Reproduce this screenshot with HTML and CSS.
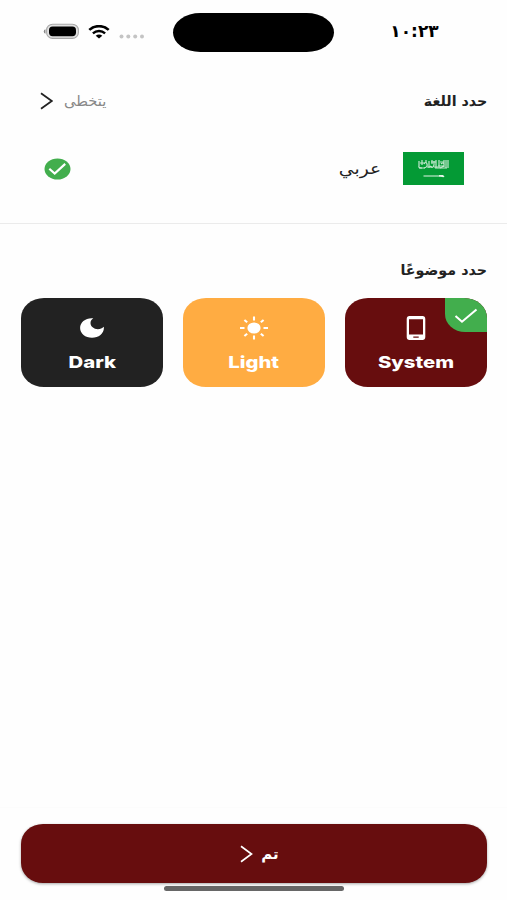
FILE: index.html
```html
<!DOCTYPE html>
<html lang="ar" dir="rtl">
<head>
    <meta charset="utf-8" />
    <meta name="viewport" content="width=device-width, initial-scale=1.0" />
    <title>حدد اللغة</title>
    <link rel="stylesheet" href="styles.css">
</head>
<body>

    <div class="statusbar">
        <span class="time">١٠:٢٣</span>
        <div class="island"></div>
        <div class="status-icons">
            <svg class="battery" width="37" height="17" viewBox="0 0 37 17">
                <path d="M2.5 6.2a2.4 2.4 0 0 0 0 4.6z" fill="#888" />
                <rect x="3.6" y="1.2" width="31.8" height="14.2" rx="6" fill="#e2e2e2" stroke="#a8a8a8" stroke-width="1.1" />
                <rect x="6" y="3.6" width="27" height="9.6" rx="3.6" fill="#000" />
            </svg>
            <svg class="wifi" width="22" height="14" viewBox="0 0 22 14">
                <path d="M1.3 4.9C6.7-.1 15.3-.1 20.7 4.9" fill="none" stroke="#000" stroke-width="2.6" />
                <path d="M4.9 8.3C8.4 5.2 13.6 5.2 17.1 8.3" fill="none" stroke="#000" stroke-width="2.4" />
                <path d="M7.7 10.7C9.6 9.1 12.4 9.1 14.3 10.7L11 13.6z" fill="#000" />
            </svg>
            <svg class="signal" width="26" height="5" viewBox="0 0 26 5">
                <g fill="#c4c4c4">
                    <circle cx="2.5" cy="2.5" r="2" />
                    <circle cx="9.3" cy="2.5" r="2" />
                    <circle cx="16.2" cy="2.5" r="2" />
                    <circle cx="23" cy="2.5" r="2" />
                </g>
            </svg>
        </div>
    </div>

    <header>
        <h1 class="title">حدد اللغة</h1>
        <a href="#" class="skip">
            <span class="skip-text">يتخطى</span>
            <svg width="13" height="18" viewBox="0 0 13 18">
                <path d="M1 1.2L11.8 9L1 16.8" fill="none" stroke="#222" stroke-width="1.8" />
            </svg>
        </a>
    </header>

    <div class="language">
        <svg class="flag" width="61" height="33" viewBox="0 0 61 33">
            <rect width="61" height="33" fill="#049a35" />
            <g fill="none" stroke="#c5e8cf" stroke-width="1.2">
                <path d="M16 9v5q-1 2 3 2M19 8v5M21 12q2-3 3 0t-3 4M23 8v3M26 9v7M27 14q3 3 4-1v-4M29 8v4M33 8v8M31 15h4M36 8v8M38 12q2-2 3 0t-4 4M41 8v7M43 8v8M45 8v8" />
                <path d="M17 11h5M24 15h5M28 10h5M35 14h5M37 10h4M16 16h6M32 16h12" />
            </g>
            <path d="M20.5 24h17" stroke="#e4f5e8" stroke-width="1" />
            <path d="M36 23h4l1.5 1.5l-1 .7l-4.5-.6z" fill="#e4f5e8" />
        </svg>
        <span class="language-name">عربي</span>
        <svg class="selected" width="27" height="22" viewBox="0 0 27 22">
            <ellipse cx="13.5" cy="11" rx="13" ry="10.6" fill="#42ae4d" />
            <path d="M5.3 10.8L10.7 15.6L21.2 5.9" fill="none" stroke="#fff" stroke-width="2.2" />
        </svg>
    </div>

    <main>
        <h2 class="title">حدد موضوعًا</h2>
        <div class="themes">
            <div class="card system">
                <div class="badge">
                    <svg width="24" height="16" viewBox="0 0 24 16">
                        <path d="M1.5 8L8 13.7L22.5 1.5" fill="none" stroke="#fff" stroke-width="2.1" />
                    </svg>
                </div>
                <svg class="icon" width="30" height="26" viewBox="0 0 30 26">
                    <path fill="#fff" fill-rule="evenodd" d="M8.6 1h12.8a2.9 2.9 0 0 1 2.9 2.9v18.2a2.9 2.9 0 0 1-2.9 2.9H8.6a2.9 2.9 0 0 1-2.9-2.9V3.900A2.900 2.900 0 0 1 8.600 1zM8 4.200v15.300h14V4.200zM12.300 21.600v1.100h5.400v-1.100z" />
                </svg>
                <span class="card-text">System</span>
            </div>
            <div class="card light">
                <svg class="icon" width="30" height="26" viewBox="0 0 30 26">
                    <ellipse cx="15" cy="13" rx="6.6" ry="5.5" fill="#fff" />
                    <path d="M15 1.5v4M15 20.5v4M1 13h4.500M24.500 13H29M5.400 5l2.800 2.300M24.600 5l-2.800 2.300M5.400 21l2.800-2.300M24.600 21l-2.800-2.300" stroke="#fff" stroke-width="2.1" />
                </svg>
                <span class="card-text">Light</span>
            </div>
            <div class="card dark">
                <svg class="icon" width="30" height="26" viewBox="0 0 30 26">
                    <path fill="#fff" d="M14.700 3.200C8 3.200 3.100 7.500 3.100 13s5.200 9.800 11.900 9.800S26.900 18.500 26.900 13q0-.6-.2-1.200C25.400 13.300 23.200 14.200 20.900 14.200C16.800 14.200 13.500 11.500 13.500 8.100C13.500 6.100 14.600 4.300 16.300 3.300Q15.500 3.200 14.700 3.200z" />
                </svg>
                <span class="card-text">Dark</span>
            </div>
        </div>
    </main>

    <footer>
        <button type="button" class="done">
            <span class="done-text">تم</span>
            <svg width="13" height="18" viewBox="0 0 13 18">
                <path d="M1 1.2L11.5 9L1 16.8" fill="none" stroke="#fff" stroke-width="1.7" />
            </svg>
        </button>
        <div class="home-indicator"></div>
    </footer>

</body>
</html>
```
FILE: styles.css
```css
* {
    box-sizing: border-box;
}

body {
    font-family: "DejaVu Sans", sans-serif;
    background-color: #fefefe;
    color: #222;
    margin: 0;
    height: 900px;
    display: flex;
    flex-direction: column;
    overflow: hidden;
}

svg {
    display: block;
    flex: none;
}

.statusbar {
    height: 64px;
    display: grid;
    grid-template-columns: 173px 161px 173px;
    align-items: center;
}

.time {
    text-align: center;
    font-size: 17px;
    font-weight: bold;
    color: #000;
    padding-right: 12px;
    margin-top: -2px;
}

.island {
    height: 39px;
    border-radius: 28px / 20px;
    background-color: #000;
}

.status-icons {
    direction: ltr;
    display: flex;
    align-items: center;
    padding-left: 43px;
    margin-top: -1px;
}

.wifi {
    margin-left: 8px;
}

.signal {
    margin: 9px 0 0 9px;
}

header {
    height: 74px;
    padding: 0 20px 0 40px;
    display: flex;
    justify-content: space-between;
    align-items: center;
}

.title {
    margin: 0;
    font-size: 14px;
    line-height: 20px;
    font-weight: bold;
    transform: scaleX(1.02);
    transform-origin: right;
}

.skip {
    display: flex;
    align-items: center;
    gap: 11px;
    color: #888;
    font-size: 14px;
    text-decoration: none;
}

.skip-text {
    transform: scaleX(1.05);
    transform-origin: left;
}

.language {
    height: 86px;
    padding: 2px 43px 26px 44px;
    display: flex;
    align-items: center;
    border-bottom: 1px solid #ebebeb;
}

.language-name {
    margin-right: 22px;
    font-size: 16px;
    transform: scaleX(1.17);
    transform-origin: right;
}

.selected {
    margin-right: auto;
}

main {
    flex: 1;
    padding: 36px 20px 0 21px;
}

.themes {
    display: grid;
    grid-template-columns: repeat(3, 1fr);
    gap: 20px;
    margin-top: 18px;
}

.card {
    position: relative;
    height: 89px;
    border-radius: 23px / 20px;
    overflow: hidden;
    color: #fff;
    display: flex;
    flex-direction: column;
    align-items: center;
    padding-top: 17px;
}

.card-text {
    font-family: Inter, sans-serif;
    font-size: 16.5px;
    line-height: 22px;
    font-weight: 800;
    margin-top: 10px;
    transform: scaleX(1.23);
}

.system {
    background-color: #670d0e;
}

.light {
    background-color: #ffac42;
}

.dark {
    background-color: #222;
}

.badge {
    position: absolute;
    top: 0;
    right: 0;
    width: 42px;
    height: 34px;
    border-bottom-left-radius: 20px 18px;
    background-color: #42ae4d;
    display: flex;
    align-items: center;
    justify-content: center;
}

.badge svg {
    margin-top: 2px;
}

footer {
    height: 93px;
    padding: 16px 20px 0 21px;
    border-top: 1px solid #fcfcfc;
}

.done {
    width: 100%;
    height: 59px;
    border: none;
    border-radius: 22px / 20px;
    background-color: #670d0e;
    color: #fff;
    font-family: inherit;
    font-size: 15px;
    font-weight: bold;
    display: flex;
    align-items: center;
    justify-content: center;
    gap: 8px;
    padding: 0 0 0 11px;
    box-shadow: 0 1px 3px rgba(0, 0, 0, 0.35);
}

.home-indicator {
    width: 180px;
    height: 5px;
    margin: 3px auto 0;
    border-radius: 3px;
    background-color: #666;
}
```
